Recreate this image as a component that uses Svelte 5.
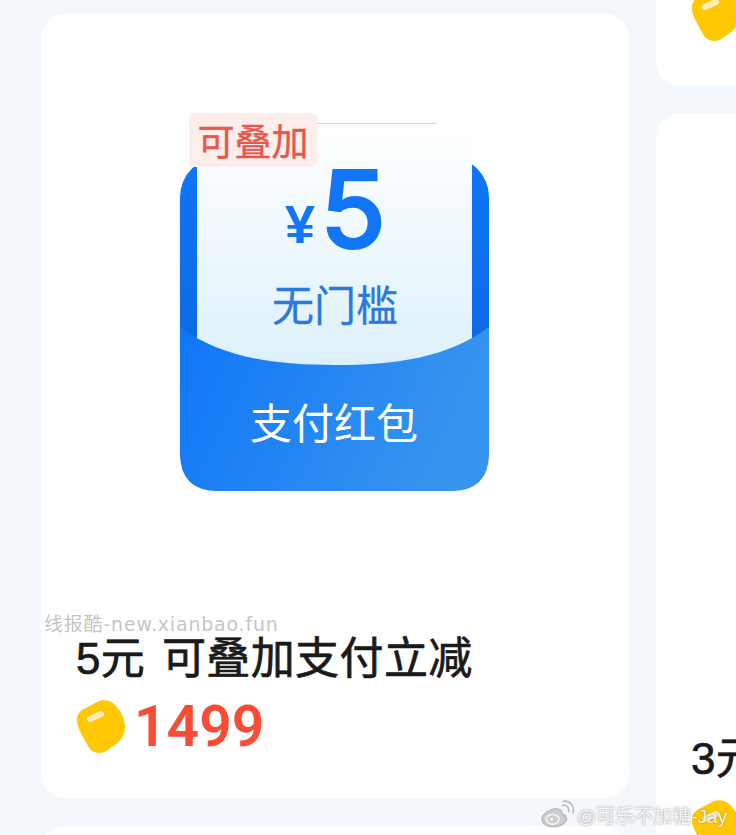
<script>
  const coin = 'M0 19C0 14 3 11 7 9L20 2C26-1 33 0 37 4C44 10 48 19 48 27C48 36 42 43 35 47C30 51 26 53 22 53C17 53 13 50 11 46C7 39 3 32 1 26C0 24 0 22 0 19Z';
</script>

{#snippet coinIcon()}
  <svg class="coin" viewBox="0 0 48 53" width="48" height="53" aria-hidden="true">
    <path d={coin} fill="#ffc800" />
    <path d="M13 19L24 14" stroke="#ffeebb" stroke-width="6" stroke-linecap="round" />
  </svg>
{/snippet}

<div class="page">
  <div class="column">
    <section class="card">
      <div class="picture">
        <svg viewBox="0 0 588 588" width="588" height="588" role="img" aria-label="5元无门槛支付红包">
          <defs>
            <linearGradient id="panel" x1="0" y1="0" x2="0" y2="1">
              <stop offset="0" stop-color="#ffffff" />
              <stop offset="1" stop-color="#dcf0fa" />
            </linearGradient>
            <linearGradient id="back" x1="0" y1="0" x2="0" y2="1">
              <stop offset="0" stop-color="#0f76f8" />
              <stop offset="0.5" stop-color="#0c6ce6" />
            </linearGradient>
            <linearGradient id="pocket" x1="0" y1="0" x2="1" y2="0.25">
              <stop offset="0" stop-color="#0f76f8" />
              <stop offset="1" stop-color="#3794ee" />
            </linearGradient>
          </defs>
          <rect x="139" y="143" width="309" height="334" rx="40" fill="url(#back)" />
          <path d="M156 144Q156 109 191 109H396Q431 109 431 144V360H156Z" fill="url(#panel)" />
          <path d="M156 109.500H396" stroke="#d8d8d8" stroke-width="1" />
          <path d="M139 313C180 344 235 351 294 351C353 351 407 344 448 313V439Q448 477 410 477H177Q139 477 139 439Z" fill="url(#pocket)" />
          <rect x="148" y="99" width="128" height="54" rx="5" fill="#fdeeec" />
          <text class="badge" x="212" y="142" text-anchor="middle">可叠加</text>
          <text class="yen" x="259" y="229" text-anchor="middle">¥</text>
          <text class="amount" x="312" y="234" text-anchor="middle">5</text>
          <text class="terms" x="294" y="307" text-anchor="middle">无门槛</text>
          <text class="label" x="293" y="425" text-anchor="middle">支付红包</text>
        </svg>
      </div>
      <h2>5元 可叠加支付立减</h2>
      <div class="price">
        {@render coinIcon()}
        <span>1499</span>
      </div>
    </section>
    <section class="card"></section>
  </div>

  <div class="column">
    <section class="card stub">
      <div class="price">
        {@render coinIcon()}
      </div>
    </section>
    <section class="card">
      <div class="picture"></div>
      <h2>3元 可叠加支付立减</h2>
      <div class="price">
        {@render coinIcon()}
        <span>999</span>
      </div>
    </section>
  </div>

  <span class="mark-site">线报酷-new.xianbao.fun</span>

  <div class="mark-weibo">
    <svg viewBox="0 0 32 26" width="34" height="28" fill="none" stroke="#fff" stroke-width="1.500" aria-hidden="true">
      <path d="M13 8C7 9 1 14 1 18C1 22 6 25 12 25C19 25 24 21 24 17C24 14 21 14 20 13C20 10 18 8 13 8Z" fill="#9a9a9a" fill-opacity="0.45" stroke="#bcbcbc" />
      <ellipse cx="11" cy="18" rx="6" ry="4.500" stroke="#f4f4f4" />
      <circle cx="10" cy="18" r="1.500" fill="#f4f4f4" stroke="none" />
      <path d="M20 5C24 4 27 7 26 11M21 1C27 0 32 5 30 12" stroke="#bcbcbc" stroke-linecap="round" />
    </svg>
    <span>@可乐不加糖-Jay</span>
  </div>
</div>

<style>
  :global(body) {
    background: #f4f7fb;
  }

  .page {
    position: relative;
    display: flex;
    gap: 27px;
    width: 736px;
    height: 835px;
    padding-left: 41px;
    box-sizing: border-box;
    overflow: hidden;
    font-family: "Liberation Sans", "Noto Sans CJK SC", sans-serif;
  }

  .column {
    display: flex;
    flex-direction: column;
    flex: 0 0 588px;
    gap: 28px;
  }

  .column:first-child {
    padding-top: 14px;
  }

  .card {
    flex: 0 0 auto;
    height: 784px;
    padding: 0 35px 45px;
    box-sizing: border-box;
    background: #fff;
    border-radius: 24px;
    display: flex;
    flex-direction: column;
    justify-content: flex-end;
  }

  .stub {
    height: 86px;
    border-radius: 0 0 24px 24px;
  }

  .picture {
    height: 620px;
    margin: 0 -35px;
  }

  .picture svg {
    display: block;
  }

  h2 {
    margin: 0 0 16px;
    font-size: 44px;
    line-height: 50px;
    font-weight: 400;
    letter-spacing: 0.4px;
    word-spacing: 4px;
    color: #1a1a1a;
    -webkit-text-stroke: 0.7px #1a1a1a;
    white-space: nowrap;
  }

  .price {
    display: flex;
    align-items: center;
    gap: 9px;
    height: 53px;
    padding-left: 1px;
  }

  .coin {
    flex: none;
  }

  .price span {
    font-family: "Roboto", sans-serif;
    font-size: 57px;
    font-weight: 600;
    color: #fa4b34;
    line-height: 53px;
  }

  text {
    font-family: "Noto Sans CJK SC", sans-serif;
  }

  .badge {
    font-size: 37px;
    stroke: #e8574c;
    stroke-width: 0.4px;
    fill: #e8574c;
  }

  .yen {
    font-family: "Liberation Sans", sans-serif;
    font-size: 54px;
    font-weight: 700;
    fill: #1275f6;
  }

  .amount {
    font-family: "Inter", sans-serif;
    font-size: 107px;
    font-weight: 500;
    stroke: #1275f6;
    stroke-width: 2px;
    fill: #1275f6;
  }

  .terms {
    font-size: 42px;
    stroke: #2a78e0;
    stroke-width: 0.3px;
    fill: #2a78e0;
  }

  .label {
    font-size: 42px;
    fill: #fff;
  }

  .mark-site {
    position: absolute;
    left: 44px;
    top: 611px;
    font-family: "DejaVu Sans", "Noto Sans CJK SC", sans-serif;
    font-size: 19px;
    line-height: 26px;
    letter-spacing: 0.8px;
    color: rgba(120, 120, 120, 0.45);
    white-space: nowrap;
  }

  .mark-weibo {
    position: absolute;
    left: 541px;
    top: 800px;
    display: flex;
    align-items: center;
    gap: 2px;
    font-size: 19px;
    color: rgba(255, 255, 255, 0.9);
    text-shadow: 0 0 2px rgba(90, 90, 90, 0.7);
    white-space: nowrap;
  }
</style>
